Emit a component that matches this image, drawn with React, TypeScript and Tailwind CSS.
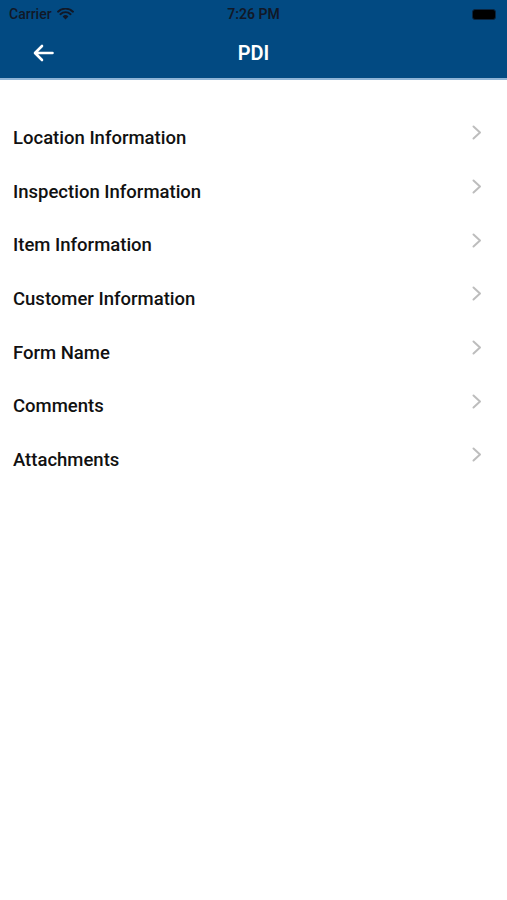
import React from 'react'

const sections = [
    'Location Information',
    'Inspection Information',
    'Item Information',
    'Customer Information',
    'Form Name',
    'Comments',
    'Attachments',
]

function StatusBar() {
    return (
        <div className="h-[28px] flex items-center px-[9px] text-[#111827] text-[14px] font-medium relative">
            <div className="flex items-center gap-[5px]">
                <span>Carrier</span>
                <svg width="17" height="12" viewBox="0 0 17 12">
                    <path d="M8.5 11.5 L5.6 8.4 A4.2 4.2 0 0 1 11.4 8.4 Z" fill="#111827" />
                    <path d="M3.4 6.2 A7.4 7.4 0 0 1 13.6 6.2" stroke="#111827" strokeWidth="1.9" fill="none" strokeLinecap="round" />
                    <path d="M1 3.7 A10.8 10.8 0 0 1 16 3.7" stroke="#111827" strokeWidth="1.9" fill="none" strokeLinecap="round" />
                </svg>
            </div>
            <span className="absolute left-1/2 -translate-x-1/2 font-semibold">7:26 PM</span>
            <div className="ml-auto mr-[2px] w-[24px] h-[11px] rounded-[3px] bg-black border border-[#0a2540]" />
        </div>
    )
}

function NavBar() {
    return (
        <div className="h-[50px] flex items-center relative">
            <button className="pl-[33px] pr-4 h-full flex items-center">
                <svg width="21" height="18" viewBox="0 0 21 18">
                    <path d="M19.5 9 H2.5 M9 2 L2 9 L9 16" stroke="white" strokeWidth="2.6" fill="none" strokeLinecap="round" strokeLinejoin="round" />
                </svg>
            </button>
            <h1 className="absolute left-1/2 -translate-x-1/2 text-white text-[20px] font-semibold">PDI</h1>
        </div>
    )
}

export default function App() {
    return (
        <div className="w-[507px] h-[900px] bg-white" style={{ fontFamily: 'Roboto, "Noto Sans", sans-serif' }}>
            <div className="bg-[#024a82] border-b-[2px] border-[#8fb4d6]">
                <StatusBar />
                <NavBar />
            </div>
            <div className="pt-[32px]">
                {sections.map((name) => (
                    <div key={name} className="h-[53.7px] flex items-center pl-[13px] pr-[25px]">
                        <p className="flex-1 text-[18.5px] font-medium text-[#111111]">{name}</p>
                        <svg width="10" height="15" viewBox="0 0 10 15" className="-mt-[12px]">
                            <path d="M1.5 1.5 L8 7.5 L1.5 13.5" stroke="#bdbdbd" strokeWidth="2" fill="none" strokeLinecap="round" strokeLinejoin="round" />
                        </svg>
                    </div>
                ))}
            </div>
        </div>
    )
}
